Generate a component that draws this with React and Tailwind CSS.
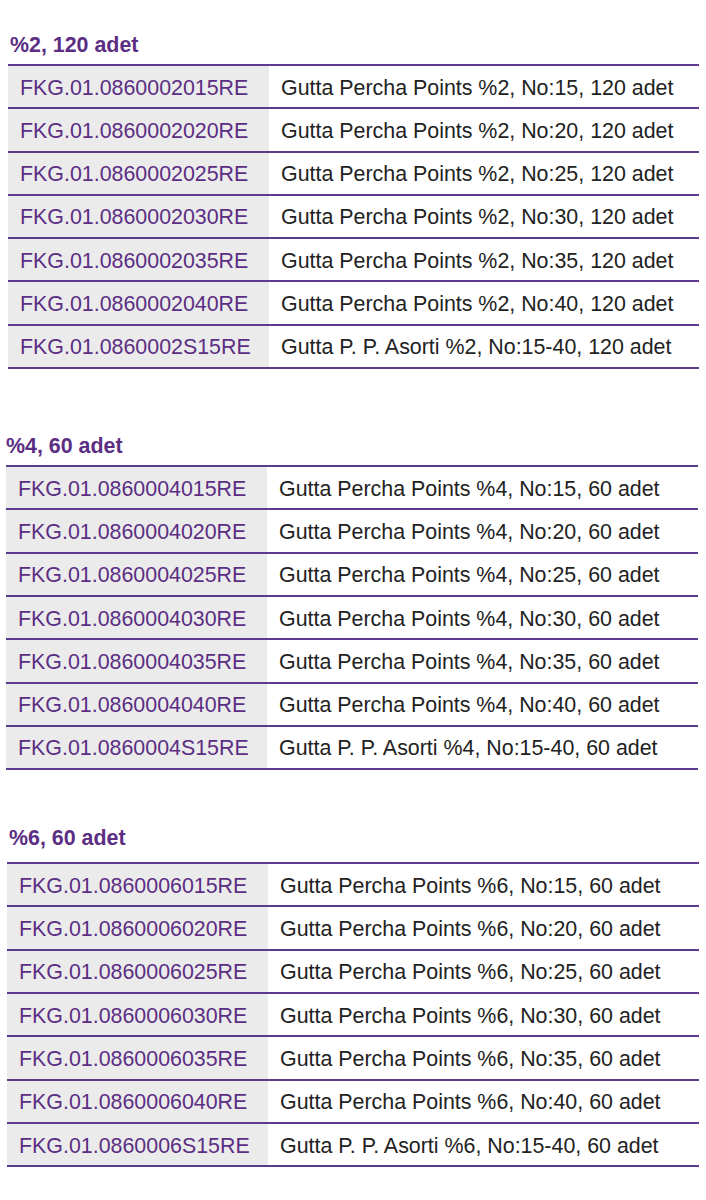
import React from "react";

const sections = [
  {
    title: "%2, 120 adet",
    pct: "2",
    count: "120",
    code: "0860002",
    wrap: "pt-[32px] pl-[8px] pr-[7px]",
    head: "pl-[2px] mb-[6px]",
  },
  {
    title: "%4, 60 adet",
    pct: "4",
    count: "60",
    code: "0860004",
    wrap: "pt-[64px] pl-[6px] pr-[8px]",
    head: "pl-0 mb-[6px]",
  },
  {
    title: "%6, 60 adet",
    pct: "6",
    count: "60",
    code: "0860006",
    wrap: "pt-[55px] pl-[7px] pr-[7px]",
    head: "pl-[2px] mb-[11px]",
  },
];

const sizes = ["015", "020", "025", "030", "035", "040"];

const Row = ({ code, desc }) => (
  <div className="flex border-b-2 border-[#5e3a8d] h-[43.3px]">
    <div className="w-[261px] shrink-0 bg-[#ebebec] pl-[12px] pt-[2px] flex items-center text-[#5b2e83]">
      {code}
    </div>
    <div className="flex-1 pl-[12px] pt-[2px] flex items-center text-[#222222]">
      {desc}
    </div>
  </div>
);

const Section = ({ s }) => {
  const rows = sizes.map((n) => ({
    code: `FKG.01.${s.code}${n}RE`,
    desc: `Gutta Percha Points %${s.pct}, No:${n.slice(1)}, ${s.count} adet`,
  }));
  rows.push({
    code: `FKG.01.${s.code}S15RE`,
    desc: `Gutta P. P. Asorti %${s.pct}, No:15-40, ${s.count} adet`,
  });

  return (
    <div className={s.wrap}>
      <h3
        className={`${s.head} h-[26px] leading-[26px] font-bold text-[#5b2e83]`}
      >
        {s.title}
      </h3>
      <div className="border-t-2 border-[#5e3a8d]">
        {rows.map((r) => (
          <Row key={r.code} code={r.code} desc={r.desc} />
        ))}
      </div>
    </div>
  );
};

export default function App() {
  return (
    <div
      className="bg-white w-[706px] min-h-[1200px] text-[21.4px]"
      style={{ fontFamily: '"Liberation Sans", Arial, sans-serif' }}
    >
      {sections.map((s) => (
        <Section key={s.title} s={s} />
      ))}
    </div>
  );
}
